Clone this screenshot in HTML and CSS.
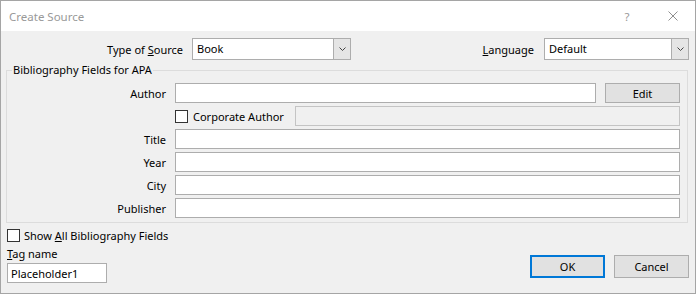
FILE: index.html
```html
<!DOCTYPE html>
<html lang="en">
<head>
    <meta charset="UTF-8">
    <title>Create Source</title>
    <link rel="stylesheet" href="styles.css">
</head>
<body>

<div class="window">
    <!-- Title bar -->
    <div class="titlebar">
        <span class="title">Create Source</span>
        <span class="help">?</span>
        <span class="close">
            <svg width="10" height="10" viewBox="0 0 10 10"><path d="M0.5 0.5L9.5 9.5M9.5 0.5L0.5 9.5" stroke="#8f8f8f" stroke-width="1" fill="none"/></svg>
        </span>
    </div>

    <div class="content">
        <!-- Source type and language -->
        <div class="top-row">
            <label class="source-label">Type of <u>S</u>ource</label>
            <div class="combo source-combo">
                <span class="combo-value">Book</span>
                <span class="combo-btn"><svg width="7" height="4" viewBox="0 0 7 4"><path d="M0.5 0.5L3.5 3.5L6.5 0.5" stroke="#444" fill="none"/></svg></span>
            </div>
            <label class="lang-label"><u>L</u>anguage</label>
            <div class="combo lang-combo">
                <span class="combo-value">Default</span>
                <span class="combo-btn"><svg width="7" height="4" viewBox="0 0 7 4"><path d="M0.5 0.5L3.5 3.5L6.5 0.5" stroke="#444" fill="none"/></svg></span>
            </div>
        </div>

        <!-- Bibliography fields -->
        <fieldset class="fields">
            <legend>Bibliography Fields for APA</legend>
            <div class="field-grid">
                <label class="field-label">Author</label>
                <div class="author-row">
                    <input type="text" class="text-input">
                    <button class="btn edit-btn">Edit</button>
                </div>

                <span></span>
                <div class="corp-row">
                    <label class="check-label corp-check"><input type="checkbox" class="check"><span>Corporate Author</span></label>
                    <input type="text" class="text-input" disabled>
                </div>

                <label class="field-label">Title</label>
                <input type="text" class="text-input">

                <label class="field-label">Year</label>
                <input type="text" class="text-input">

                <label class="field-label">City</label>
                <input type="text" class="text-input">

                <label class="field-label">Publisher</label>
                <input type="text" class="text-input">
            </div>
        </fieldset>

        <!-- Tag name and dialog buttons -->
        <div class="bottom">
            <div class="tag-col">
                <label class="check-label"><input type="checkbox" class="check"><span>Show <u>A</u>ll Bibliography Fields</span></label>
                <div class="tag-label"><u>T</u>ag name</div>
                <input type="text" class="text-input tag-input" value="Placeholder1">
            </div>
            <div class="buttons">
                <button class="btn btn-ok">OK</button>
                <button class="btn">Cancel</button>
            </div>
        </div>
    </div>
</div>

</body>
</html>
```

FILE: styles.css
```css
body {
    margin: 0;
    font-family: "Noto Sans", "Open Sans", sans-serif;
    font-size: 11px;
    color: #000;
}
.window {
    width: 696px;
    height: 294px;
    box-sizing: border-box;
    border: 1px solid #a5a5a5;
    background-color: #f0f0f0;
}
.titlebar {
    height: 30px;
    background-color: #fff;
    display: flex;
    align-items: center;
    padding-left: 8px;
    font-size: 11.5px;
}
.title {
    flex: 1;
    color: #999;
}
.help {
    width: 20px;
    text-align: center;
    color: #999;
    margin-right: 31px;
}
.close {
    display: flex;
    margin-right: 17px;
}
.top-row {
    display: flex;
    align-items: center;
    height: 22px;
    margin: 7px 6px 0 0;
}
.source-label {
    width: 182px;
    text-align: right;
    margin-right: 9px;
}
.lang-label {
    margin-left: auto;
    margin-right: 10px;
}
.combo {
    display: flex;
    height: 22px;
    box-sizing: border-box;
    border: 1px solid #adadad;
    background-color: #fff;
}
.source-combo {
    width: 159px;
}
.lang-combo {
    width: 145px;
}
.combo-value {
    flex: 1;
    padding-left: 4px;
    line-height: 20px;
}
.combo-btn {
    width: 16px;
    background-color: #e5e5e5;
    border-left: 1px solid #adadad;
    display: flex;
    align-items: center;
    justify-content: center;
}
.fields {
    margin: 3px 7px 0 5px;
    padding: 6px 7px 4px 0;
    border: 1px solid #dcdcdc;
    min-width: 0;
}
.fields legend {
    margin-left: 5px;
    padding: 0 1px;
    line-height: 14px;
}
.field-grid {
    display: grid;
    grid-template-columns: 159px 1fr;
    column-gap: 9px;
    row-gap: 3px;
    grid-auto-rows: 20px;
    align-items: center;
}
.field-label {
    text-align: right;
}
.text-input {
    height: 20px;
    box-sizing: border-box;
    margin: 0;
    padding: 0 3px;
    border: 1px solid #adadad;
    background-color: #fff;
    font: inherit;
    color: #000;
    outline: none;
}
.text-input:disabled {
    background-color: #f0f0f0;
    border-color: #c4c4c4;
}
.author-row, .corp-row {
    display: flex;
    gap: 9px;
    height: 20px;
}
.author-row .text-input, .corp-row .text-input {
    flex: 1;
    min-width: 0;
}
.corp-row {
    gap: 0;
}
.check-label {
    display: flex;
    align-items: center;
    gap: 4px;
}
.corp-check {
    width: 120px;
    gap: 5px;
}
.check {
    appearance: none;
    width: 13px;
    height: 13px;
    margin: 0;
    border: 1px solid #333;
    background-color: #fff;
    box-sizing: border-box;
}
.btn {
    width: 75px;
    height: 23px;
    box-sizing: border-box;
    border: 1px solid #adadad;
    background-color: #e1e1e1;
    font: inherit;
    color: #000;
    padding: 0;
}
.edit-btn {
    height: 20px;
}
.btn-ok {
    border: 2px solid #0078d7;
}
.bottom {
    display: flex;
    justify-content: space-between;
    margin: 0 6px;
}
.tag-col {
    padding-top: 6px;
    display: flex;
    flex-direction: column;
    align-items: flex-start;
}
.tag-col .check-label {
    height: 13px;
}
.tag-label {
    margin-top: 4px;
    line-height: 16px;
}
.tag-input {
    margin-top: 1px;
    width: 100px;
}
.buttons {
    display: flex;
    gap: 9px;
    align-self: flex-end;
    margin-bottom: 5px;
}
```
